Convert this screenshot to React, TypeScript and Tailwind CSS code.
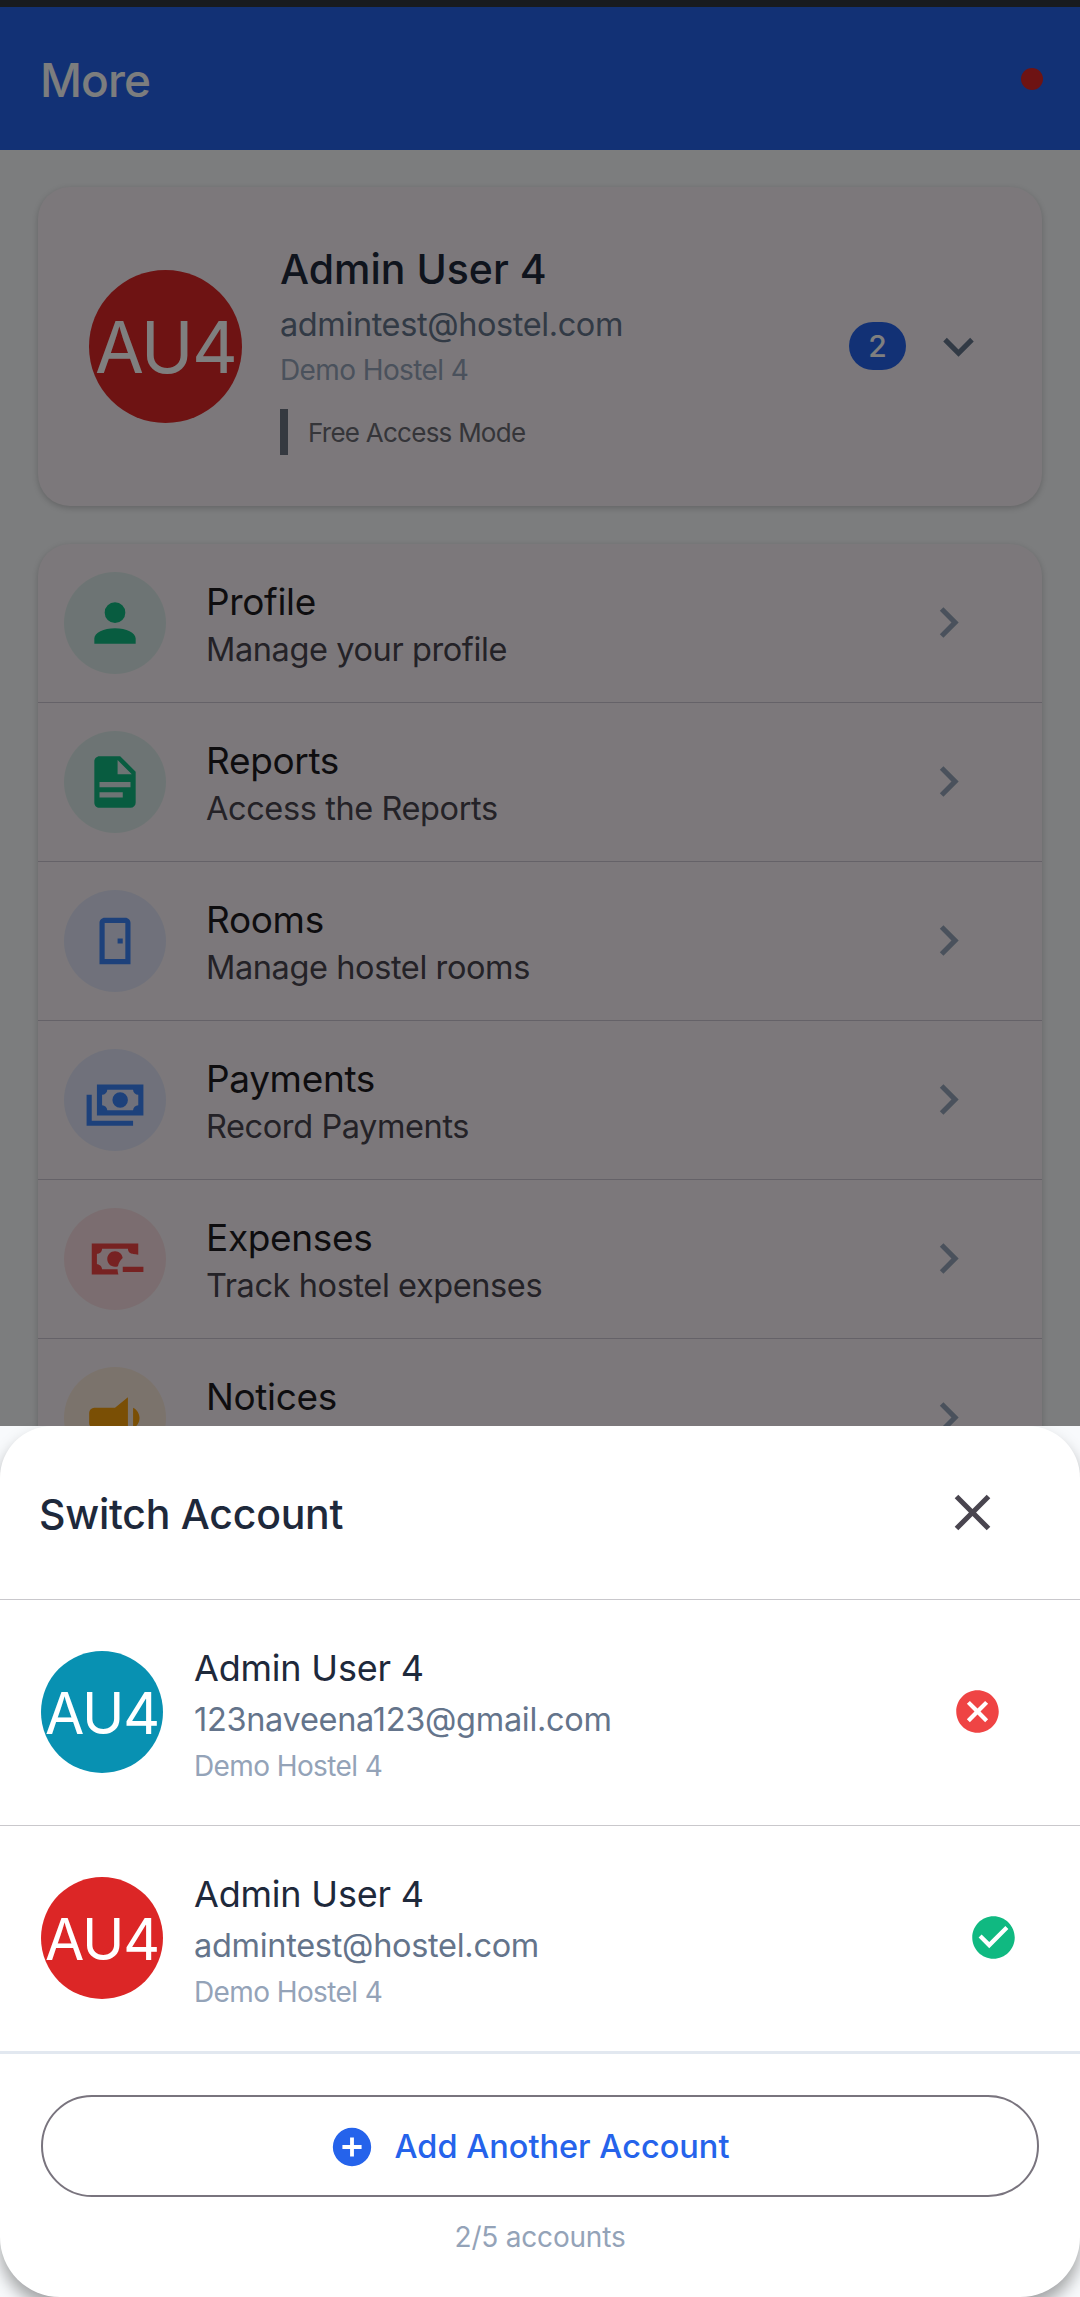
import clsx from "clsx";

const icons = {
  account:
    "M12,4A4,4 0 0,1 16,8A4,4 0 0,1 12,12A4,4 0 0,1 8,8A4,4 0 0,1 12,4M12,14C16.42,14 20,15.79 20,18V20H4V18C4,15.79 7.58,14 12,14Z",
  document:
    "M13,9H18.5L13,3.5V9M6,2H14L20,8V20A2,2 0 0,1 18,22H6C4.89,22 4,21.1 4,20V4C4,2.89 4.89,2 6,2M15,18V16H6V18H15M18,14V12H6V14H18Z",
  door: "M8,3C6.89,3 6,3.89 6,5V21H18V5C18,3.89 17.11,3 16,3H8M8,5H16V19H8V5M13,11V13H15V11H13Z",
  cashMultiple:
    "M5,6H23V18H5V6M14,9A3,3 0 0,1 17,12A3,3 0 0,1 14,15A3,3 0 0,1 11,12A3,3 0 0,1 14,9M9,8A2,2 0 0,1 7,10V14A2,2 0 0,1 9,16H19A2,2 0 0,1 21,14V10A2,2 0 0,1 19,8H9M1,10H3V20H19V22H1V10Z",
  cashMinus:
    "M15 15V17H23V15M14.97 11.61C14.85 10.28 13.59 8.97 12 9C10.3 9.03 9 10.3 9 12C9 13.7 10.3 14.94 12 15C12.38 15 12.77 14.92 13.14 14.77C13.41 13.67 13.86 12.63 14.97 11.61M13 16H7C7 14.9 6.1 14 5 14V10C6.1 10 7 9.1 7 8H17C17 9.1 17.9 10 19 10V10.06C19.67 10.06 20.34 10.18 21 10.4V6H3V18H13.32C13.1 17.33 13 16.66 13 16Z",
  bullhorn:
    "M12,8H4A2,2 0 0,0 2,10V14A2,2 0 0,0 4,16H5V20A1,1 0 0,0 6,21H8A1,1 0 0,0 9,20V16H12L17,20V4L12,8M21.5,12C21.5,13.71 20.54,15.26 19,16V8C20.53,8.75 21.5,10.3 21.5,12Z",
  chevronRight: "M8.59,16.58L13.17,12L8.59,7.41L10,6L16,12L10,18L8.59,16.58Z",
  chevronDown: "M7.41,8.58L12,13.17L16.59,8.58L18,10L12,16L6,10L7.41,8.58Z",
  close:
    "M19,6.41L17.59,5L12,10.59L6.41,5L5,6.41L10.59,12L5,17.59L6.41,19L12,13.41L17.59,19L19,17.59L13.41,12L19,6.41Z",
  closeCircle:
    "M12,2C17.53,2 22,6.47 22,12C22,17.53 17.53,22 12,22C6.47,22 2,17.53 2,12C2,6.47 6.47,2 12,2M15.59,7L12,10.59L8.41,7L7,8.41L10.59,12L7,15.59L8.41,17L12,13.41L15.59,17L17,15.59L13.41,12L17,8.41L15.59,7Z",
  checkCircle:
    "M12 2C6.5 2 2 6.5 2 12S6.5 22 12 22 22 17.5 22 12 17.5 2 12 2M10 17L5 12L6.41 10.59L10 14.17L17.59 6.58L19 8L10 17Z",
  plusCircle:
    "M17,13H13V17H11V13H7V11H11V7H13V11H17M12,2A10,10 0 0,0 2,12A10,10 0 0,0 12,22A10,10 0 0,0 22,12A10,10 0 0,0 12,2Z"
};

type IconProps = {
  name: keyof typeof icons;
  className?: string;
};

const Icon = ({ name, className }: IconProps) => (
  <svg viewBox="0 0 24 24" fill="currentColor" className={clsx("shrink-0", className)}>
    <path d={icons[name]} />
  </svg>
);

type MenuItem = {
  title: string;
  description?: string;
  icon: keyof typeof icons;
  color: string;
};

const menuItems: MenuItem[] = [
  {
    title: "Profile",
    description: "Manage your profile",
    icon: "account",
    color: "bg-[#10b981]/12 text-[#10b981]"
  },
  {
    title: "Reports",
    description: "Access the Reports",
    icon: "document",
    color: "bg-[#10b981]/12 text-[#10b981]"
  },
  {
    title: "Rooms",
    description: "Manage hostel rooms",
    icon: "door",
    color: "bg-[#3b82f6]/12 text-[#3b82f6]"
  },
  {
    title: "Payments",
    description: "Record Payments",
    icon: "cashMultiple",
    color: "bg-[#3b82f6]/12 text-[#3b82f6]"
  },
  {
    title: "Expenses",
    description: "Track hostel expenses",
    icon: "cashMinus",
    color: "bg-[#ef4444]/12 text-[#ef4444]"
  },
  {
    title: "Notices",
    icon: "bullhorn",
    color: "bg-[#f59e0b]/12 text-[#f59e0b]"
  }
];

const accounts = [
  {
    name: "Admin User 4",
    email: "123naveena123@gmail.com",
    hostel: "Demo Hostel 4",
    avatar: "bg-[#0891b2]",
    active: false
  },
  {
    name: "Admin User 4",
    email: "admintest@hostel.com",
    hostel: "Demo Hostel 4",
    avatar: "bg-[#dc2626]",
    active: true
  }
];

const Header = () => (
  <header className="flex h-[143px] shrink-0 items-center justify-between bg-[#2563eb] pr-[37px] pl-10">
    <h1 className="pt-[3px] text-[46px] font-medium tracking-[-0.9px] text-[#f8fafc]">More</h1>
    <span className="size-[22px] rounded-full bg-[#dc2626]" />
  </header>
);

const ProfileCard = () => (
  <section className="flex h-[319px] shrink-0 items-center rounded-[32px] bg-[#f8f1f6] pr-[53px] pb-px pl-[51px] shadow-[0_2px_6px_rgba(0,0,0,0.2)]">
    <div className="flex size-[153px] shrink-0 items-center justify-center rounded-full bg-[#dc2626] pt-0.5 text-[71px] tracking-[-1.8px] text-white">
      AU4
    </div>
    <div className="ml-[38px] flex-1 pt-[7px]">
      <h2 className="text-[41px] leading-[50px] font-medium text-[#1e293b]">Admin User 4</h2>
      <p className="mt-[9px] text-[32.5px] leading-[44px] tracking-[-0.4px] text-[#64748b]">
        admintest@hostel.com
      </p>
      <p className="mt-1 text-[28px] leading-[38px] tracking-[-0.6px] text-[#94a3b8]">
        Demo Hostel 4
      </p>
      <div className="mt-5 flex h-[46px] items-center border-l-8 border-[#6b7280] pl-5 text-[26px] tracking-[-0.75px] text-[#6b6b73]">
        Free Access Mode
      </div>
    </div>
    <span className="mr-[22px] flex h-12 w-[57px] items-center justify-center rounded-full bg-[#2563eb] text-[30px] font-medium text-white">
      2
    </span>
    <Icon name="chevronDown" className="size-[61px] text-[#64748b]" />
  </section>
);

const MenuRow = ({ title, description, icon, color }: MenuItem) => (
  <div className="flex h-[159px] items-center border-b border-[#cac4d0] pr-[63px] pb-px pl-[26px]">
    <div className={clsx("flex size-[102px] items-center justify-center rounded-full", color)}>
      <Icon name={icon} className="size-[62px]" />
    </div>
    <div className="ml-10 flex-1 pt-[7px]">
      <p className="text-[37px] leading-[46px] tracking-[-0.35px] text-[#1c1b1f]">{title}</p>
      <p className="mt-0.5 h-[46px] text-[32.5px] leading-[46px] tracking-[-0.4px] text-[#49454f]">
        {description}
      </p>
    </div>
    <Icon name="chevronRight" className="size-[61px] text-[#94a3b8]" />
  </div>
);

const SwitchAccountSheet = () => (
  <section className="relative flex h-[871px] flex-col rounded-t-[52px] rounded-b-[60px] bg-white shadow-[0_10px_16px_rgba(0,0,0,0.35)]">
    <div className="flex h-[174px] items-center justify-between border-b border-[#c9c8cc] pr-[77px] pl-[39px]">
      <h2 className="pt-1 text-[41px] font-medium tracking-[-0.25px] text-[#1e293b]">
        Switch Account
      </h2>
      <Icon name="close" className="size-[61px] text-[#49454f]" />
    </div>

    {accounts.map(({ name, email, hostel, avatar, active }) => (
      <div
        key={email}
        className={clsx(
          "flex items-center pb-0.5 pl-[41px]",
          active ? "h-[225px] pr-[61px]" : "h-[226px] border-b border-[#c9c8cc] pr-[77px]"
        )}
      >
        <div
          className={clsx(
            "flex size-[122px] items-center justify-center rounded-full pt-[5px] text-[57px] tracking-[-1.2px] text-white",
            avatar
          )}
        >
          AU4
        </div>
        <div className="ml-[31px] flex-1 pt-[7px]">
          <p className="text-[36px] leading-[46px] tracking-[-0.2px] text-[#1e293b]">{name}</p>
          <p className="mt-[7px] text-[32.5px] leading-[44px] tracking-[-0.3px] text-[#64748b]">
            {email}
          </p>
          <p className="mt-[5px] text-[28px] leading-[38px] tracking-[-0.6px] text-[#94a3b8]">
            {hostel}
          </p>
        </div>
        {active ? (
          <Icon name="checkCircle" className="size-[51px] text-[#10b981]" />
        ) : (
          <Icon name="closeCircle" className="size-[51px] text-[#ef4444]" />
        )}
      </div>
    ))}

    <div className="flex flex-col border-t-3 border-[#e2e8f0] px-[41px] pt-[41px]">
      <button className="flex h-[102px] items-center justify-center gap-5 rounded-full border-[2.5px] border-[#79747e] pt-0.5 pr-[22px] text-[32.5px] font-medium text-[#2563eb]">
        <Icon name="plusCircle" className="size-[46px]" />
        Add Another Account
      </button>
      <p className="mt-[21px] text-center text-[28px] leading-[38px] tracking-[-0.2px] text-[#94a3b8]">
        2/5 accounts
      </p>
    </div>
  </section>
);

const App = () => {
  return (
    <div className="h-[2297px] w-[1080px] overflow-hidden bg-[#f8fafc] font-['Inter',sans-serif]">
      <div className="relative z-10 flex h-[1426px] flex-col overflow-hidden">
        <div className="h-[7px] shrink-0 bg-[#30373f]" />
        <Header />
        <main className="flex flex-col gap-[38px] px-[38px] pt-[37px]">
          <ProfileCard />
          <section className="rounded-t-[32px] bg-[#f8f1f6] shadow-[0_2px_6px_rgba(0,0,0,0.2)]">
            {menuItems.map((item) => (
              <MenuRow key={item.title} {...item} />
            ))}
          </section>
        </main>
        {/* backdrop behind the sheet */}
        <div className="absolute inset-0 bg-black/50" />
      </div>
      <SwitchAccountSheet />
    </div>
  );
};

export default App;
